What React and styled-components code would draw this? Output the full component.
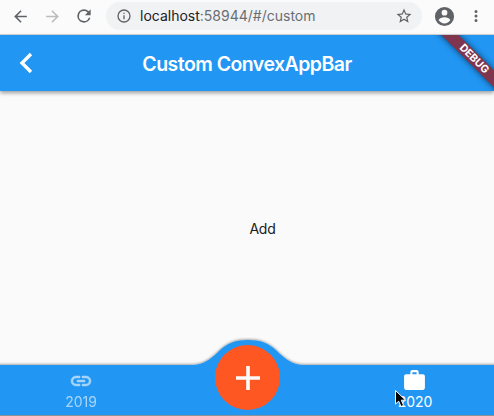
import React from "react";
import styled, { createGlobalStyle } from "styled-components";

const GlobalStyle = createGlobalStyle`
  *, *::before, *::after { box-sizing: border-box; }
  body { margin: 0; overflow: hidden; font-family: Inter, "Liberation Sans", sans-serif; }
`;

const Window = styled.div`
  position: relative;
  width: 494px;
  height: 416px;
  display: flex;
  flex-direction: column;
  overflow: hidden;
  background: #fafafa;
`;

const Toolbar = styled.header`
  height: 35px;
  flex: none;
  display: flex;
  align-items: flex-start;
  padding: 2px 0 0 6px;
  background: #fbfbfb;
  border-bottom: 1px solid #d5d6d8;
`;

const ToolButton = styled.button`
  width: ${(p) => p.$width || 32}px;
  height: 28px;
  flex: none;
  display: flex;
  align-items: center;
  justify-content: center;
  padding: 0;
  border: 0;
  background: none;
  color: ${(p) => (p.$muted ? "#babcbe" : "#5f6368")};
`;

const AddressBar = styled.div`
  width: 316px;
  height: 28px;
  flex: none;
  margin-left: 8px;
  padding: 0 9px 0 10px;
  display: flex;
  align-items: center;
  border-radius: 14px;
  background: #f1f2f4;
  color: #5f6368;
`;

const Url = styled.span`
  flex: 1;
  margin-left: 8px;
  font-size: 14px;
  line-height: 28px;
  color: #6a6e72;
  white-space: nowrap;
`;

const Host = styled.span`
  color: #202124;
`;

const AppBar = styled.div`
  position: relative;
  z-index: 1;
  height: 56px;
  flex: none;
  display: grid;
  grid-template-columns: 56px 1fr 56px;
  align-items: center;
  background: #2196f3;
  color: #fff;
  box-shadow: 0 2px 4px rgba(0, 0, 0, 0.38);
`;

const BackButton = styled.button`
  display: flex;
  margin-left: 18px;
  padding: 0;
  border: 0;
  background: none;
  color: inherit;
`;

const Title = styled.h1`
  margin: 0;
  padding-top: 1px;
  text-align: center;
  font-size: 19.5px;
  font-weight: 600;
  line-height: 24px;
  letter-spacing: -0.54px;
  white-space: nowrap;
`;

const DebugCorner = styled.div`
  position: absolute;
  top: 0;
  right: 0;
  width: 70px;
  height: 56px;
  overflow: hidden;
`;

const DebugRibbon = styled.div`
  position: absolute;
  left: -0.5px;
  top: 18px;
  width: 100px;
  height: 12px;
  transform: rotate(45deg);
  background: #80354f;
  box-shadow: 0 0 6px rgba(0, 0, 0, 0.6);
  text-align: center;
  font-size: 10.5px;
  font-weight: 700;
  line-height: 12px;
`;

const Content = styled.main`
  flex: 1;
  display: flex;
  align-items: center;
  justify-content: center;
  padding-left: 31px;
  font-size: 14px;
  letter-spacing: -0.2px;
  color: #202020;
`;

const Navigation = styled.nav`
  position: relative;
  height: 51px;
  flex: none;
  display: grid;
  grid-template-columns: 162px 1fr 162px;
  color: #fff;
`;

const NavShape = styled.svg`
  position: absolute;
  left: 0;
  top: -31px;
  overflow: visible;
`;

const NavItem = styled.div`
  position: relative;
  display: flex;
  flex-direction: column;
  align-items: center;
  padding-top: 3px;
  padding-left: ${(p) => (p.$active ? "3px" : "0")};
  opacity: ${(p) => (p.$active ? 1 : 0.6)};
`;

const NavIcon = styled.span`
  height: 25px;
  display: flex;
  align-items: center;
`;

const NavLabel = styled.span`
  font-size: 14px;
  line-height: 17px;
  padding-left: ${(p) => (p.$inset ? "1px" : "0")};
`;

const AddButton = styled.button`
  position: relative;
  justify-self: center;
  top: -20px;
  left: 0.5px;
  width: 65px;
  height: 65px;
  padding: 0;
  display: flex;
  align-items: center;
  justify-content: center;
  border: 0;
  border-radius: 50%;
  background: #ff5722;
  color: #fafafa;
`;

const Cursor = styled.svg`
  position: absolute;
  left: 394px;
  top: 389px;
`;

function Icon({ size, d, weight = 0 }) {
  return (
    <svg width={size} height={size} viewBox="0 0 24 24" fill="currentColor" stroke="currentColor" strokeWidth={weight}>
      <path d={d} />
    </svg>
  );
}

const icons = {
  back: "M20 11H7.83l5.59-5.59L12 4l-8 8 8 8 1.41-1.41L7.83 13H20z",
  forward: "M4 13h12.17l-5.59 5.59L12 20l8-8-8-8-1.41 1.41L16.17 11H4z",
  reload:
    "M17.65 6.35A7.96 7.96 0 0 0 12 4a8 8 0 1 0 7.73 10h-2.08A6 6 0 1 1 12 6c1.66 0 3.14.69 4.22 1.78L13 11h7V4z",
  info: "M11 17h2v-6h-2zm0-8h2V7h-2zm1-7a10 10 0 1 0 0 20 10 10 0 0 0 0-20m0 18a8 8 0 1 1 0-16 8 8 0 0 1 0 16",
  star: "M22 9.24l-7.19-.62L12 2 9.19 8.63 2 9.24l5.46 4.73L5.82 21 12 17.27 18.18 21l-1.63-7.03zM12 15.4l-3.76 2.27 1-4.28-3.32-2.88 4.38-.38L12 6.1l1.71 4.04 4.38.38-3.32 2.88 1 4.28z",
  account:
    "M12 2a10 10 0 1 0 0 20 10 10 0 0 0 0-20m0 3a3 3 0 1 1 0 6 3 3 0 0 1 0-6m0 14.2a7.2 7.2 0 0 1-6-3.22c.03-1.99 4-3.08 6-3.08 1.99 0 5.97 1.09 6 3.08a7.2 7.2 0 0 1-6 3.22",
  more: "M12 8a2 2 0 1 0 0-4 2 2 0 0 0 0 4m0 2a2 2 0 1 0 0 4 2 2 0 0 0 0-4m0 6a2 2 0 1 0 0 4 2 2 0 0 0 0-4",
  link: "M3.9 12c0-1.71 1.39-3.1 3.1-3.1h4V7H7a5 5 0 0 0 0 10h4v-1.9H7c-1.71 0-3.1-1.39-3.1-3.1M8 13h8v-2H8zm9-6h-4v1.9h4a3.1 3.1 0 0 1 0 6.2h-4V17h4a5 5 0 0 0 0-10",
  work: "M20 6h-4V4c0-1.11-.89-2-2-2h-4c-1.11 0-2 .89-2 2v2H4c-1.11 0-2 .89-2 2v11c0 1.11.89 2 2 2h16c1.11 0 2-.89 2-2V8c0-1.11-.89-2-2-2m-6 0h-4V4h4z",
};

export default function App() {
  return (
    <>
      <GlobalStyle />
      <Window>
        <Toolbar>
          <ToolButton $width={28} aria-label="Back"><Icon size={19} d={icons.back} /></ToolButton>
          <ToolButton $width={36} $muted aria-label="Forward"><Icon size={19} d={icons.forward} /></ToolButton>
          <ToolButton $width={28} aria-label="Reload"><Icon size={20} d={icons.reload} /></ToolButton>
          <AddressBar>
            <Icon size={16} d={icons.info} />
            <Url><Host>localhost</Host>:58944/#/custom</Url>
            <Icon size={18} d={icons.star} />
          </AddressBar>
          <ToolButton $width={44} aria-label="Profile"><Icon size={23} d={icons.account} /></ToolButton>
          <ToolButton $width={20} aria-label="Menu"><Icon size={18} d={icons.more} /></ToolButton>
        </Toolbar>

        <AppBar>
          <BackButton aria-label="Go back">
            <svg width="16" height="22" viewBox="0 0 16 22" fill="none" stroke="currentColor" strokeWidth="3.3">
              <path d="M13 2 4 11l9 9" />
            </svg>
          </BackButton>
          <Title>Custom ConvexAppBar</Title>
          <DebugCorner>
            <DebugRibbon>DEBUG</DebugRibbon>
          </DebugCorner>
        </AppBar>

        <Content>Add</Content>

        <Navigation>
          <NavShape width="494" height="82" viewBox="0 334 494 82">
            <defs>
              <filter id="barShadow" x="-5%" y="-20%" width="110%" height="140%">
                <feDropShadow dx="0" dy="-1" stdDeviation="1.3" floodColor="#000" floodOpacity="0.34" />
              </filter>
            </defs>
            <path
              d="M-10 365H192C203 365 211 359 219 351C227 343 236 340 248 340C260 340 269 343 277 351C285 359 293 365 304 365H504V426H-10Z"
              fill="#2196f3"
              filter="url(#barShadow)"
            />
            <path d="M0 415.5H494" stroke="#8a9299" />
          </NavShape>
          <NavItem>
            <NavIcon><Icon size={24} d={icons.link} weight={0.5} /></NavIcon>
            <NavLabel>2019</NavLabel>
          </NavItem>
          <AddButton aria-label="Add">
            <svg width="24" height="24" viewBox="0 0 24 24" stroke="currentColor" strokeWidth="3.6">
              <path d="M0 12h24M12 0v24" />
            </svg>
          </AddButton>
          <NavItem $active>
            <NavIcon><Icon size={25} d={icons.work} /></NavIcon>
            <NavLabel $inset>2020</NavLabel>
          </NavItem>
        </Navigation>

        <Cursor width="13" height="20" viewBox="0 0 13 20">
          <path d="M1.5 1.5V15l3.2-2.8L7 17.5l2.6-1.1-2.3-5.2h4.3z" fill="#000" stroke="#fff" strokeWidth="1" />
        </Cursor>
      </Window>
    </>
  );
}
